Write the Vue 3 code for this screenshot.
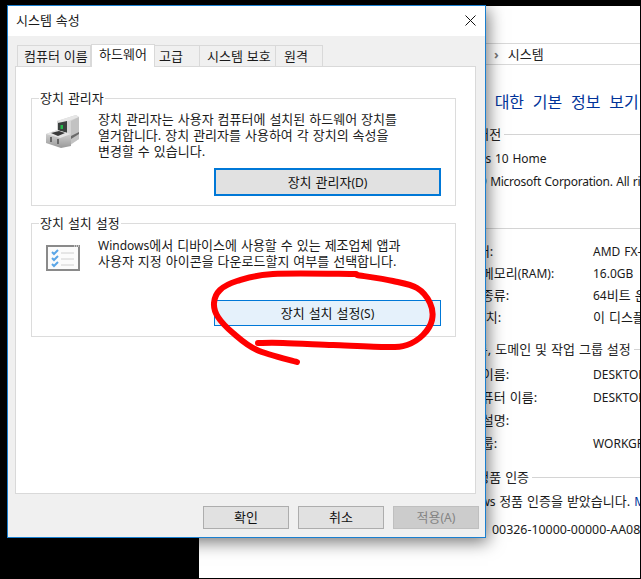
<script setup>
const points1 = [[356,274],[273,274],[237,281],[220,290],[214,303],[218,317],[233,333],[257,350],[297,362]]
const points2 = [[357,275],[393,281],[417,288],[430,303],[432,320],[423,335],[407,345],[387,347],[333,345],[283,343],[258,343]]

function smooth(p) {
  let d = `M${p[0][0]} ${p[0][1]}`
  for (let i = 0; i < p.length - 1; i++) {
    const a = p[Math.max(i - 1, 0)], b = p[i], c = p[i + 1], e = p[Math.min(i + 2, p.length - 1)]
    d += ` C${b[0] + (c[0] - a[0]) / 6} ${b[1] + (c[1] - a[1]) / 6} ${c[0] - (e[0] - b[0]) / 6} ${c[1] - (e[1] - b[1]) / 6} ${c[0]} ${c[1]}`
  }
  return d
}
const scribble = [smooth(points1), smooth(points2)]

const tabs = [
  { label: '컴퓨터 이름', w: 74, pad: 6 },
  { label: '하드웨어', w: 64, pad: 7, active: true },
  { label: '고급', w: 45, pad: 4 },
  { label: '시스템 보호', w: 76, pad: 7 },
  { label: '원격', w: 47, pad: 8 }
]
const systemRows = [
  ['프로세서:', 'AMD FX-8350 Eight-Core Processor'],
  ['설치된 메모리(RAM):', '16.0GB'],
  ['시스템 종류:', '64비트 운영 체제'],
  ['펜 및 터치:', '이 디스플레이에 사용할 수 있는']
]
const nameRows = [
  ['컴퓨터 이름:', 'DESKTOP-ABCDEFG'],
  ['전체 컴퓨터 이름:', 'DESKTOP-ABCDEFG'],
  ['컴퓨터 설명:', ''],
  ['작업 그룹:', 'WORKGROUP']
]
// Latin runs are set a size smaller than the Hangul around them
function parts(text) {
  return text.split(/([A-Za-z0-9().\-:]+)/).filter(Boolean).map((t) => ({ t, lat: /[A-Za-z0-9]/.test(t) }))
}
</script>

<template>
  <div class="desktop">
    <section class="back">
      <div class="back-top"></div>
      <div class="crumb"><span class="chev">›</span><span>시스템</span></div>
      <div class="back-body">
        <h1 class="heading">시스템에 대한 기본 정보 보기</h1>
        <div class="sec sec-edition"><span><span class="lat">Windows</span> 버전</span><i></i></div>
        <div class="indent lat line-a">Windows 10 Home</div>
        <div class="indent lat line-b">© 2019 Microsoft Corporation. All rights reserved.</div>
        <div class="sec sec-system"><span>시스템</span><i></i></div>
        <div class="rows rows-system">
          <div v-for="r in systemRows" :key="r[0]" class="row">
            <span><span v-for="(p, i) in parts(r[0])" :key="i" :class="{ lat: p.lat }">{{ p.t }}</span></span>
            <span><span v-for="(p, i) in parts(r[1])" :key="i" :class="{ lat: p.lat }">{{ p.t }}</span></span>
          </div>
        </div>
        <div class="sec sec-name"><span>컴퓨터 이름, 도메인 및 작업 그룹 설정</span><i></i></div>
        <div class="rows rows-name">
          <div v-for="r in nameRows" :key="r[0]" class="row">
            <span>{{ r[0] }}</span>
            <span class="lat">{{ r[1] }}</span>
          </div>
        </div>
        <div class="sec sec-act"><span><span class="lat">Windows</span> 정품 인증</span><i></i></div>
        <div class="indent line-c"><span class="lat win">Windows</span> 정품 인증을 받았습니다. <span class="link lat">Microsoft</span></div>
        <div class="line-d"><span class="id-label">제품 ID:</span><span class="lat id-value">00326-10000-00000-AA087</span></div>
      </div>
    </section>

    <section class="dialog">
      <header class="titlebar">
        <span>시스템 속성</span>
        <svg class="close" width="11" height="11" viewBox="0 0 11 11"><path d="M.5.5l10 10M10.5.5l-10 10" stroke="#111" fill="none" /></svg>
      </header>
      <div class="content">
        <nav class="tabs">
          <div v-for="t in tabs" :key="t.label" class="tab" :class="{ active: t.active }" :style="{ width: t.w + 'px', paddingLeft: t.pad + 'px' }">{{ t.label }}</div>
        </nav>
        <div class="panel">
          <fieldset class="group group-a">
            <legend>장치 관리자</legend>
            <div class="group-main">
              <svg class="icon device" width="36" height="33" viewBox="0 0 36 33">
                <defs>
                  <linearGradient id="devFront" x1="0" y1="0" x2="0" y2="1"><stop offset="0" stop-color="#dcdcdc" /><stop offset="1" stop-color="#999" /></linearGradient>
                </defs>
                <path d="M12 6 L31 0 L34 2 L34 24 L24 31 L12 20Z" fill="#d4d4d4" />
                <path d="M12 6 L31 0 L34 2 L18 8Z" fill="#e6e6e6" />
                <path d="M26 6 L34 2 L34 24 L26 29Z" fill="#c2c2c2" />
                <path d="M13 8 L22 6 L22 18 L13 18Z" fill="#3a403e" />
                <rect x="15.5" y="10" width="2.5" height="4" fill="#22b84a" />
                <path d="M1 19 L12 15 L26 19 L26 31 L16 33 L1 28Z" fill="url(#devFront)" />
                <path d="M1 19 L12 15 L26 19 L15 23Z" fill="#e4e4e4" />
                <path d="M6 18 L14 16 L20 18 L13 21Z" fill="#3a3a3a" />
                <rect x="5" y="22" width="2" height="5" fill="#666" />
                <rect x="12" y="24" width="2" height="5" fill="#666" />
                <path d="M26 21 L34 17 L34 19 L26 24Z" fill="#6a6a6a" />
              </svg>
              <div class="group-text">
                <p>장치 관리자는 사용자 컴퓨터에 설치된 하드웨어 장치를<br />열거합니다. 장치 관리자를 사용하여 각 장치의 속성을<br />변경할 수 있습니다.</p>
                <button class="btn wide focused" type="button">장치 관리자<span class="lat">(D)</span></button>
              </div>
            </div>
          </fieldset>
          <fieldset class="group group-b">
            <legend>장치 설치 설정</legend>
            <div class="group-main">
              <svg class="icon list" width="34" height="26" viewBox="0 0 34 26">
                <rect x="1" y="1" width="32" height="24" fill="#fbfbfb" stroke="#8a8a8a" stroke-width="2" />
                <rect x="0" y="0" width="34" height="2" fill="#8a8a8a" />
                <path d="M28 1h1M30 1h1M32 1h1" stroke="#fff" />
                <path d="M6 7l2 2 4-4M6 13l2 2 4-4M6 19l2 2 4-4" fill="none" stroke="#5aa5e6" stroke-width="2" />
                <path d="M15 8h13M15 14h13M15 20h13" stroke="#d0d0d0" />
              </svg>
              <div class="group-text">
                <p><span class="lat">Windows</span>에서 디바이스에 사용할 수 있는 제조업체 앱과<br />사용자 지정 아이콘을 다운로드할지 여부를 선택합니다.</p>
                <button class="btn wide hover" type="button">장치 설치 설정<span class="lat">(S)</span></button>
              </div>
            </div>
          </fieldset>
        </div>
        <footer class="actions">
          <button class="btn act" type="button">확인</button>
          <button class="btn act" type="button">취소</button>
          <button class="btn act disabled" type="button">적용<span class="lat">(A)</span></button>
        </footer>
      </div>
    </section>

    <svg class="scribble" width="641" height="579" viewBox="0 0 641 579">
      <path v-for="d in scribble" :key="d" :d="d" />
    </svg>
  </div>
</template>

<style>
html, body { margin: 0; background: #000; }
</style>

<style scoped>
.desktop {
  position: relative;
  width: 641px;
  height: 579px;
  overflow: hidden;
  background: #000;
  font: 13px/17px "Noto Sans", "Noto Sans CJK KR", sans-serif;
  word-spacing: .6px;
  color: #1a1a1a;
}
.lat { font-size: 12px; }
.back {
  position: absolute;
  left: 199px;
  top: 6px;
  width: 441px;
  height: 572px;
  background: #fff;
  overflow: hidden;
}
.back-top { height: 37px; }
.crumb {
  height: 20px;
  border-top: 1px solid #d9d9d9;
  border-bottom: 1px solid #d9d9d9;
  display: flex;
  align-items: center;
  padding-left: 295px;
  gap: 9px;
  color: #222;
}
.chev { color: #777; font-weight: 700; }
.back-body { padding-left: 225px; white-space: nowrap; }
.heading {
  margin: 26px 0 0 3px;
  font-size: 16px;
  line-height: 22px;
  font-weight: 400;
  word-spacing: 4.6px;
  color: #003399;
}
.sec { display: flex; align-items: center; gap: 3px; height: 18px; color: #222; }
.sec i { flex: 1; height: 1px; background: #d4d4d4; margin-right: -4px; }
.sec-edition { margin-top: 12px; margin-left: -2px; }
.indent { line-height: 20px; }
.line-a { margin-top: 6px; padding-left: 16px; }
.line-b { margin-top: 3px; padding-left: 23px; letter-spacing: -.25px; }
.sec-system { margin-top: 27px; }
.rows { padding-left: 18px; }
.row { display: grid; grid-template-columns: 151px 1fr; height: 22px; align-items: center; }
.rows-system { margin-top: 3px; }
.sec-name { margin-top: 12px; }
.rows-name { margin-top: 5px; }
.rows-name .row { height: 23px; }
.sec-act { margin-top: 13px; margin-left: -2px; }
.line-c { margin-top: 5px; padding-left: 22px; }
.win { letter-spacing: -.3px; }
.line-d {
  display: grid;
  grid-template-columns: 50px 1fr;
  margin-top: 8px;
  padding-left: 18px;
  line-height: 20px;
}
.id-label { font-size: 12px; overflow: hidden; }
.id-value { font-size: 12.4px; }
.link { color: #003399; }

.dialog {
  position: absolute;
  left: 7px;
  top: 5px;
  width: 477px;
  height: 531px;
  border: 1px solid #1a7fcf;
  background: #f0f0f0;
  box-shadow: 2px 4px 16px rgba(0, 0, 0, .55);
  display: flex;
  flex-direction: column;
}
.titlebar {
  height: 30px;
  box-sizing: border-box;
  padding: 0 9px 2px 8px;
  background: #fff;
  display: flex;
  align-items: center;
  justify-content: space-between;
  flex: none;
}
.content { flex: 1; display: flex; flex-direction: column; padding: 0 9px 0 7px; }
.tabs { display: flex; height: 30px; align-items: flex-end; padding-left: 2px; position: relative; z-index: 1; }
.tab {
  height: 21px;
  box-sizing: border-box;
  border: 1px solid #d9d9d9;
  border-left: 0;
  border-bottom: 0;
  background: #f0f0f0;
  display: flex;
  align-items: center;
  white-space: nowrap;
}
.tab:first-child { border-left: 1px solid #d9d9d9; }
.tab.active {
  height: 23px;
  background: #fff;
  margin-bottom: -1px;
  padding-bottom: 3px;
  border-left: 1px solid #d9d9d9;
}
.panel {
  height: 428px;
  box-sizing: border-box;
  border: 1px solid #d9d9d9;
  background: #fff;
  padding: 23px 19px 0 15px;
  display: flex;
  flex-direction: column;
  gap: 9px;
}
.group {
  margin: 0;
  padding: 0;
  min-width: 0;
  border: 1px solid #dcdcdc;
  box-sizing: border-box;
}
.group legend { margin-left: 7px; padding: 0 1px; line-height: 17px; }
.group-a { height: 116px; }
.group-b { height: 122px; }
.group-main { display: flex; }
.icon { flex: none; filter: blur(.35px); }
.group-a .icon { margin: 8px 0 0 13px; }
.group-b .icon { margin: 13px 0 0 14px; }
.group-text { flex: 1; display: flex; flex-direction: column; }
.group-a .group-text { margin-left: 17px; }
.group-b .group-text { margin-left: 18px; }
.group-text p { margin: 0; line-height: 16px; white-space: nowrap; }
.group-a p { margin-top: 4px; }
.group-b p { margin-top: 6px; line-height: 15.5px; }
.btn {
  font: inherit;
  word-spacing: inherit;
  color: #111;
  background: #e1e1e1;
  border: 1px solid #adadad;
  box-sizing: border-box;
  padding: 0;
}
.wide { width: 227px; margin-left: 116px; }
.focused { height: 28px; margin-top: 9px; border: 2px solid #0078d7; }
.hover { height: 26px; margin-top: 31px; background: #e5f1fb; border-color: #0078d7; }
.actions { display: flex; gap: 9px; justify-content: flex-end; padding-top: 12px; margin-right: -3px; }
.act { width: 86px; height: 23px; }
.act.disabled { background: #cccccc; border-color: #bfbfbf; color: #838383; }

.scribble { position: absolute; left: 0; top: 0; pointer-events: none; filter: blur(.4px); }
.scribble path {
  fill: none;
  stroke: #f00;
  stroke-width: 6;
  stroke-linecap: round;
  stroke-linejoin: round;
}
</style>
